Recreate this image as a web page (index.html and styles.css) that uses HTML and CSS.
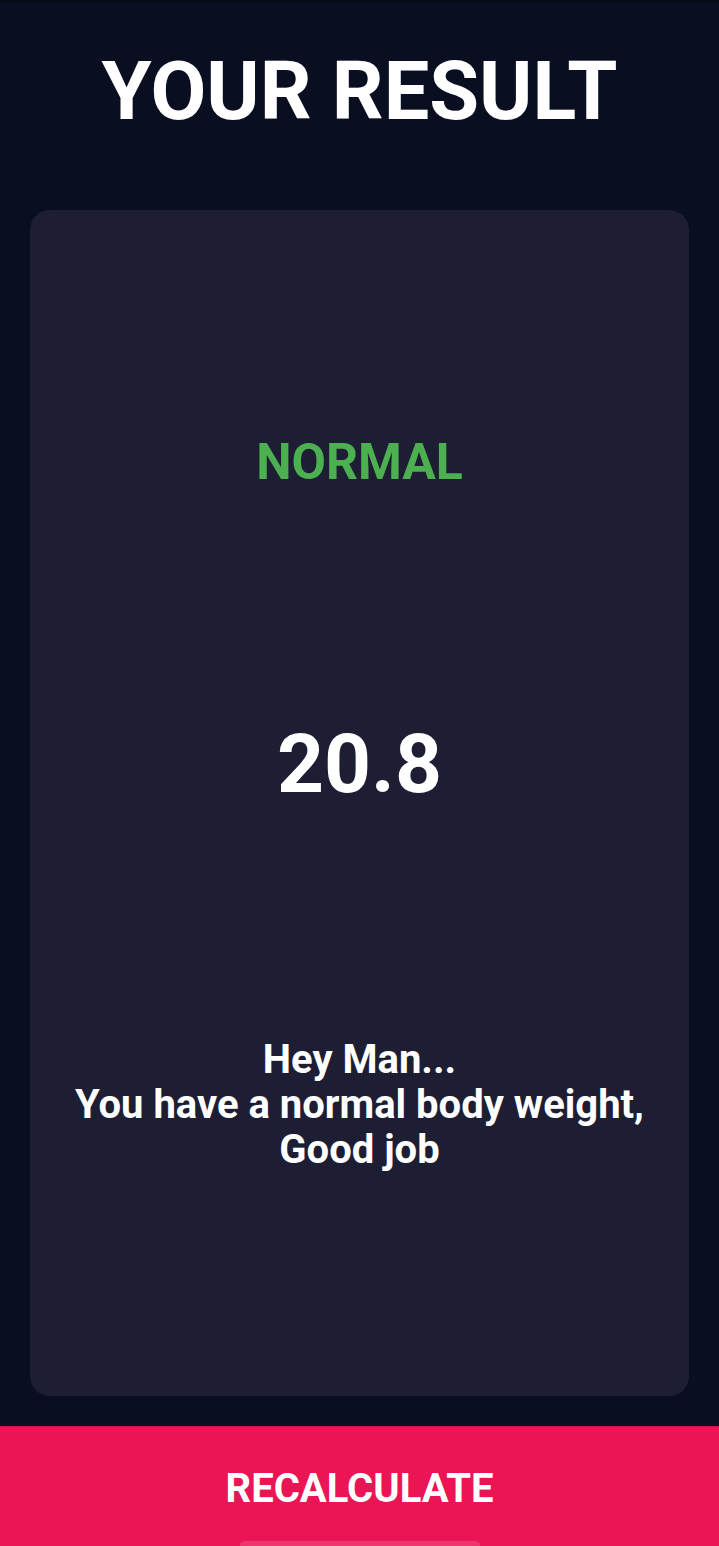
FILE: index.html
```html
<!DOCTYPE html>
<html lang="en">
<head>
<meta charset="utf-8">
<title>BMI Result</title>
<link rel="stylesheet" href="styles.css">
</head>
<body>
<div class="screen">
  <header class="header">
    <h1 class="title">YOUR RESULT</h1>
  </header>
  <main class="card">
    <p class="status">NORMAL</p>
    <p class="bmi">20.8</p>
    <p class="message">Hey Man...<br>You have a normal body weight,<br>Good job</p>
  </main>
  <button class="recalc" type="button">
    <span class="recalc-label">RECALCULATE</span>
    <span class="home-indicator"></span>
  </button>
</div>
</body>
</html>
```

FILE: styles.css
```css
* { box-sizing: border-box; }
html, body {
  margin: 0;
  padding: 0;
  background: #0a0e21;
  font-family: Roboto, "Noto Sans", "Liberation Sans", sans-serif;
}
.screen {
  width: 719px;
  height: 1546px;
  display: flex;
  flex-direction: column;
  overflow: hidden;
}
.header {
  height: 180px;
  flex: 0 0 auto;
  display: flex;
  align-items: center;
  justify-content: center;
  border-top: 3px solid #070a19;
}
.title {
  margin: 0;
  color: #ffffff;
  font-size: 81px;
  font-weight: 700;
  line-height: 1;
  position: relative;
  top: 0;
}
.card {
  flex: 1 1 auto;
  margin: 30px;
  background: #1d1e33;
  border-radius: 20px;
  display: flex;
  flex-direction: column;
  justify-content: space-evenly;
  align-items: center;
  text-align: center;
}
.card p { margin: 0; }
.status {
  color: #4caf50;
  font-size: 50px;
  font-weight: 700;
  line-height: 56px;
}
.bmi {
  color: #ffffff;
  font-size: 82px;
  font-weight: 700;
  line-height: 100px;
}
.message {
  color: #ffffff;
  font-size: 40px;
  font-weight: 700;
  line-height: 45px;
}
.recalc {
  flex: 0 0 120px;
  height: 120px;
  width: 100%;
  border: 0;
  border-top: 1px solid #c9134a;
  background: #eb1555;
  color: #ffffff;
  font-family: inherit;
  font-size: 40px;
  font-weight: 700;
  padding: 4px 0 0;
  position: relative;
  display: flex;
  align-items: center;
  justify-content: center;
}
.recalc-label { line-height: 1; }
.home-indicator {
  position: absolute;
  left: 240px;
  width: 240px;
  bottom: -4px;
  height: 9px;
  border-radius: 5px;
  background: rgba(255, 255, 255, 0.14);
}
```
